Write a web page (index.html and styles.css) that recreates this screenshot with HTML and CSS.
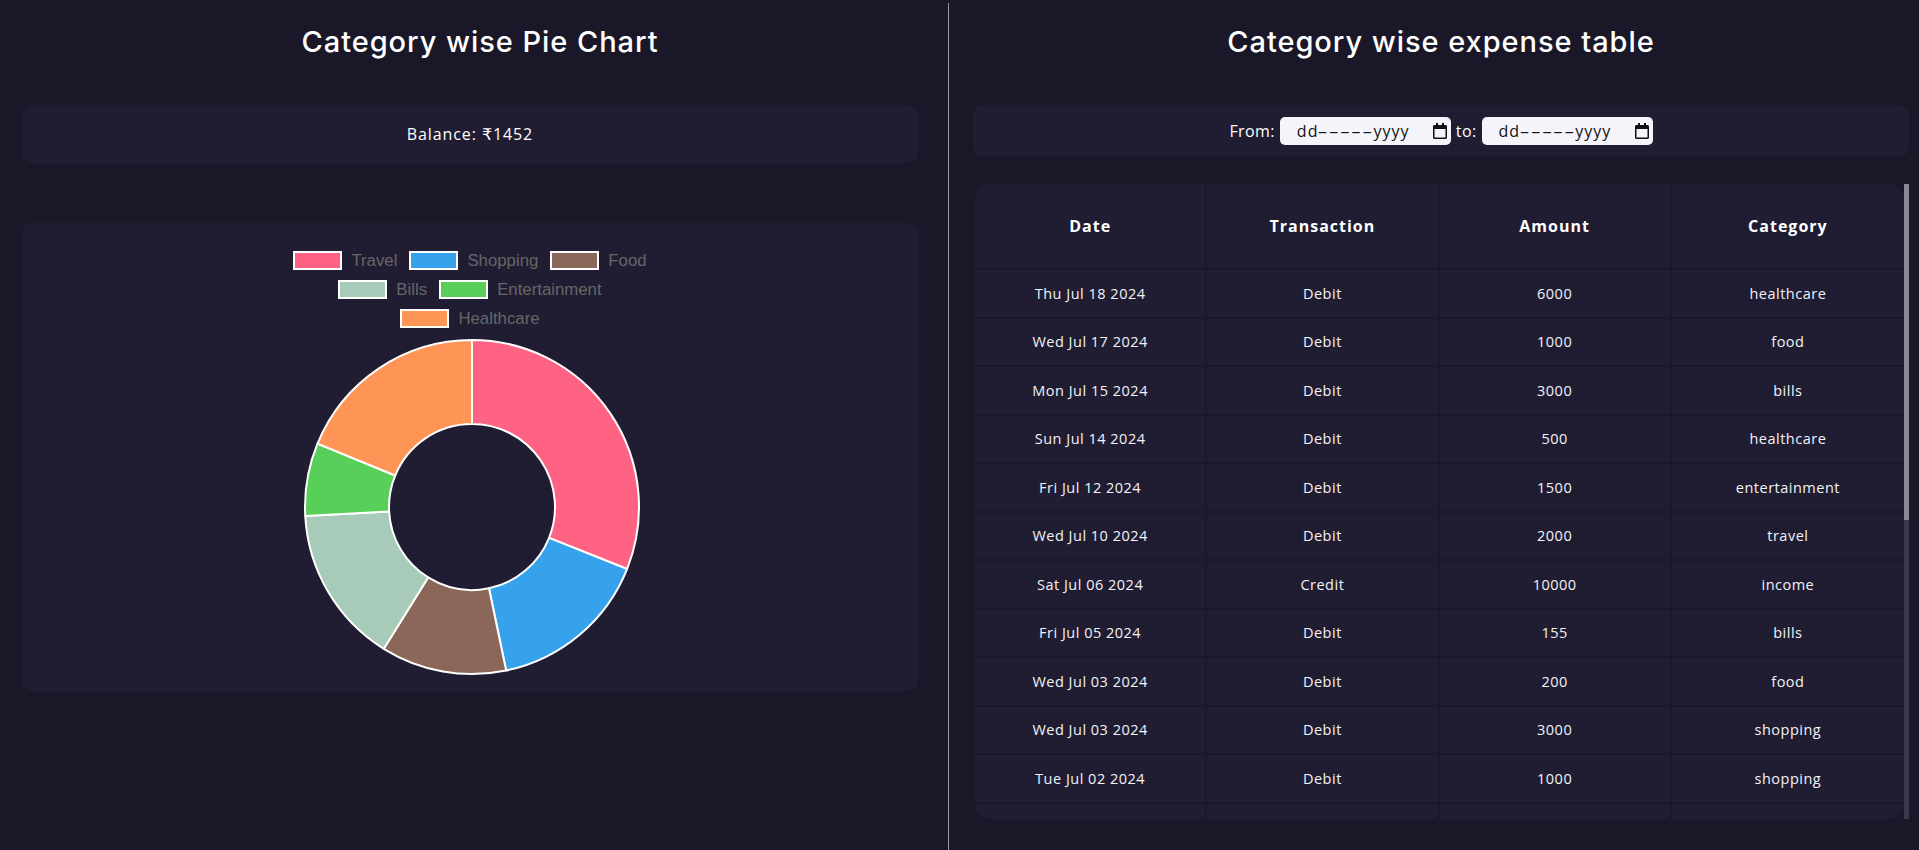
FILE: index.html
```html
<!DOCTYPE html>
<html lang="en">
<head>
<meta charset="utf-8">
<title>Expenses</title>
<link rel="stylesheet" href="styles.css">
</head>
<body>
<div class="page">
  <section class="col col-left">
    <h2 class="title title-left">Category wise Pie Chart</h2>
    <div class="balance">Balance: ₹1452</div>
    <div class="chart-card">
      <div class="legend">
        <div class="legend-row">
          <span class="legend-item"><span class="swatch sw-travel"></span>Travel</span>
          <span class="legend-item"><span class="swatch sw-shopping"></span>Shopping</span>
          <span class="legend-item"><span class="swatch sw-food"></span>Food</span>
        </div>
        <div class="legend-row">
          <span class="legend-item"><span class="swatch sw-bills"></span>Bills</span>
          <span class="legend-item"><span class="swatch sw-ent"></span>Entertainment</span>
        </div>
        <div class="legend-row">
          <span class="legend-item"><span class="swatch sw-health"></span>Healthcare</span>
        </div>
      </div>
      <svg class="donut" width="340" height="340" viewBox="0 0 340 340">
        <g stroke="#ffffff" stroke-width="2" stroke-linejoin="round">
          <path fill="#ff6384" d="M170 3 A167 167 0 0 1 325.06 232.02 L247.07 200.83 A83 83 0 0 0 170 87 Z"/>
          <path fill="#36a2eb" d="M325.06 232.02 A167 167 0 0 1 204.15 333.48 L186.97 251.25 A83 83 0 0 0 247.07 200.83 Z"/>
          <path fill="#8a6758" d="M204.15 333.48 A167 167 0 0 1 81.76 311.78 L126.14 240.47 A83 83 0 0 0 186.97 251.25 Z"/>
          <path fill="#a8cbb9" d="M81.76 311.78 A167 167 0 0 1 3.24 179.03 L87.12 174.49 A83 83 0 0 0 126.14 240.47 Z"/>
          <path fill="#58cf58" d="M3.24 179.03 A167 167 0 0 1 15.49 106.62 L93.21 138.50 A83 83 0 0 0 87.12 174.49 Z"/>
          <path fill="#ff9457" d="M15.49 106.62 A167 167 0 0 1 170 3 L170 87 A83 83 0 0 0 93.21 138.50 Z"/>
        </g>
      </svg>
    </div>
  </section>
  <div class="divider"></div>
  <section class="col col-right">
    <h2 class="title">Category wise expense table</h2>
    <div class="filter">
      <span class="filter-label">From:</span>
      <span class="date-input"><span class="date-text">dd<span class="dash">-----</span>yyyy</span>
        <svg class="cal" width="14" height="16" viewBox="0 0 14 16"><path fill="#111" d="M3 0h2v2h4V0h2v2h1.5c.8 0 1.5.7 1.5 1.5v11c0 .8-.7 1.5-1.5 1.5h-11C.7 16 0 15.3 0 14.5v-11C0 2.7.7 2 1.5 2H3V0zm-1.5 6v8.5h11V6h-11z"/></svg>
      </span>
      <span class="filter-label">to:</span>
      <span class="date-input"><span class="date-text">dd<span class="dash">-----</span>yyyy</span>
        <svg class="cal" width="14" height="16" viewBox="0 0 14 16"><path fill="#111" d="M3 0h2v2h4V0h2v2h1.5c.8 0 1.5.7 1.5 1.5v11c0 .8-.7 1.5-1.5 1.5h-11C.7 16 0 15.3 0 14.5v-11C0 2.7.7 2 1.5 2H3V0zm-1.5 6v8.5h11V6h-11z"/></svg>
      </span>
    </div>
    <div class="table-area">
      <div class="table-wrap">
        <table class="tx">
          <thead>
            <tr><th>Date</th><th>Transaction</th><th>Amount</th><th>Category</th></tr>
          </thead>
          <tbody>
            <tr><td>Thu Jul 18 2024</td><td>Debit</td><td>6000</td><td>healthcare</td></tr>
            <tr><td>Wed Jul 17 2024</td><td>Debit</td><td>1000</td><td>food</td></tr>
            <tr><td>Mon Jul 15 2024</td><td>Debit</td><td>3000</td><td>bills</td></tr>
            <tr><td>Sun Jul 14 2024</td><td>Debit</td><td>500</td><td>healthcare</td></tr>
            <tr><td>Fri Jul 12 2024</td><td>Debit</td><td>1500</td><td>entertainment</td></tr>
            <tr><td>Wed Jul 10 2024</td><td>Debit</td><td>2000</td><td>travel</td></tr>
            <tr><td>Sat Jul 06 2024</td><td>Credit</td><td>10000</td><td>income</td></tr>
            <tr><td>Fri Jul 05 2024</td><td>Debit</td><td>155</td><td>bills</td></tr>
            <tr><td>Wed Jul 03 2024</td><td>Debit</td><td>200</td><td>food</td></tr>
            <tr><td>Wed Jul 03 2024</td><td>Debit</td><td>3000</td><td>shopping</td></tr>
            <tr><td>Tue Jul 02 2024</td><td>Debit</td><td>1000</td><td>shopping</td></tr>
            <tr class="row-partial"><td></td><td></td><td></td><td></td></tr>
          </tbody>
        </table>
      </div>
      <div class="scrollbar"><div class="thumb"></div></div>
    </div>
  </section>
</div>
</body>
</html>
```
FILE: styles.css
```css
* { box-sizing: border-box; }
html, body { margin: 0; padding: 0; }
body {
  background: #1a1828;
  color: #ffffff;
  font-family: "Open Sans", "DejaVu Sans", sans-serif;
  height: 850px;
  overflow: hidden;
}
.page {
  display: grid;
  grid-template-columns: 948px 1px 1fr;
  height: 850px;
}
.divider {
  background: #9795a8;
  margin-top: 3px;
}
.col-left { padding: 0 30px 0 22px; }
.col-right { padding: 0 10px 0 24px; }

.title {
  margin: 0;
  padding-top: 22px;
  font-family: "Inter", "Open Sans", sans-serif;
  font-size: 29px;
  line-height: 40px;
  font-weight: 500;
  text-align: center;
  color: #ffffff;
  letter-spacing: 0.95px;
}
.title-left { padding-left: 20px; }

.balance {
  margin-top: 43px;
  height: 58px;
  background: #201d32;
  border-radius: 10px;
  display: flex;
  align-items: center;
  justify-content: center;
  font-size: 16px;
  letter-spacing: 0.9px;
}

.chart-card {
  margin-top: 60px;
  background: #201d32;
  border-radius: 10px;
  padding: 23px 0 14px;
  display: flex;
  flex-direction: column;
  align-items: center;
}
.legend {
  display: flex;
  flex-direction: column;
  align-items: center;
  font-family: "Liberation Sans", Arial, sans-serif;
  font-size: 16.8px;
  color: #666666;
}
.legend-row {
  display: flex;
  justify-content: center;
  gap: 12px;
  height: 29px;
  align-items: center;
}
.legend-item {
  display: inline-flex;
  align-items: center;
}
.swatch {
  display: inline-block;
  width: 49px;
  height: 19px;
  border: 2px solid #ffffff;
  margin-right: 9px;
}
.sw-travel { background: #ff6384; }
.sw-shopping { background: #36a2eb; }
.sw-food { background: #8a6758; }
.sw-bills { background: #a8cbb9; }
.sw-ent { background: #58cf58; }
.sw-health { background: #ff9457; }
.donut {
  display: block;
  margin-top: 4px;
  margin-left: 4px;
}

.filter {
  margin-top: 43px;
  height: 52px;
  background: #201d32;
  border-radius: 10px;
  display: flex;
  align-items: center;
  justify-content: center;
  gap: 5px;
  font-size: 16px;
  letter-spacing: 0.4px;
}
.filter-label { color: #ffffff; }
.date-input {
  display: inline-flex;
  align-items: center;
  width: 171px;
  height: 28px;
  background: #f5f4fa;
  border-radius: 5px;
  padding: 0 4px 0 17px;
  color: #111111;
  font-size: 16px;
}
.date-text {
  display: inline-flex;
  align-items: baseline;
  letter-spacing: 1px;
}
.dash {
  display: inline-block;
  width: 55px;
  text-align: center;
  letter-spacing: 0.6px;
  transform: scaleX(1.95);
}
.cal { margin-left: auto; display: block; }

.table-area {
  margin-top: 27px;
  display: flex;
  height: 635px;
}
.table-wrap {
  flex: 1;
  margin-left: 2px;
  height: 100%;
  overflow: hidden;
  border-radius: 15px;
}
.scrollbar {
  width: 5px;
  height: 100%;
  background: #3b3a4d;
}
.thumb {
  height: 336px;
  background: #8a8898;
}

.tx {
  width: 100%;
  border-collapse: separate;
  border-spacing: 0;
  table-layout: fixed;
}
.tx th, .tx td {
  background: #201d32;
  border-right: 2px solid #1a1828;
  border-bottom: 2px solid #1a1828;
  text-align: center;
  vertical-align: middle;
  padding: 0;
}
.tx th:last-child, .tx td:last-child { border-right: none; }
.tx th {
  height: 86px;
  font-size: 16px;
  font-weight: 700;
  color: #ffffff;
  letter-spacing: 1px;
}
.tx td {
  height: 48.5px;
  font-size: 14.5px;
  color: #f2f2f7;
  letter-spacing: 0.5px;
}
```
